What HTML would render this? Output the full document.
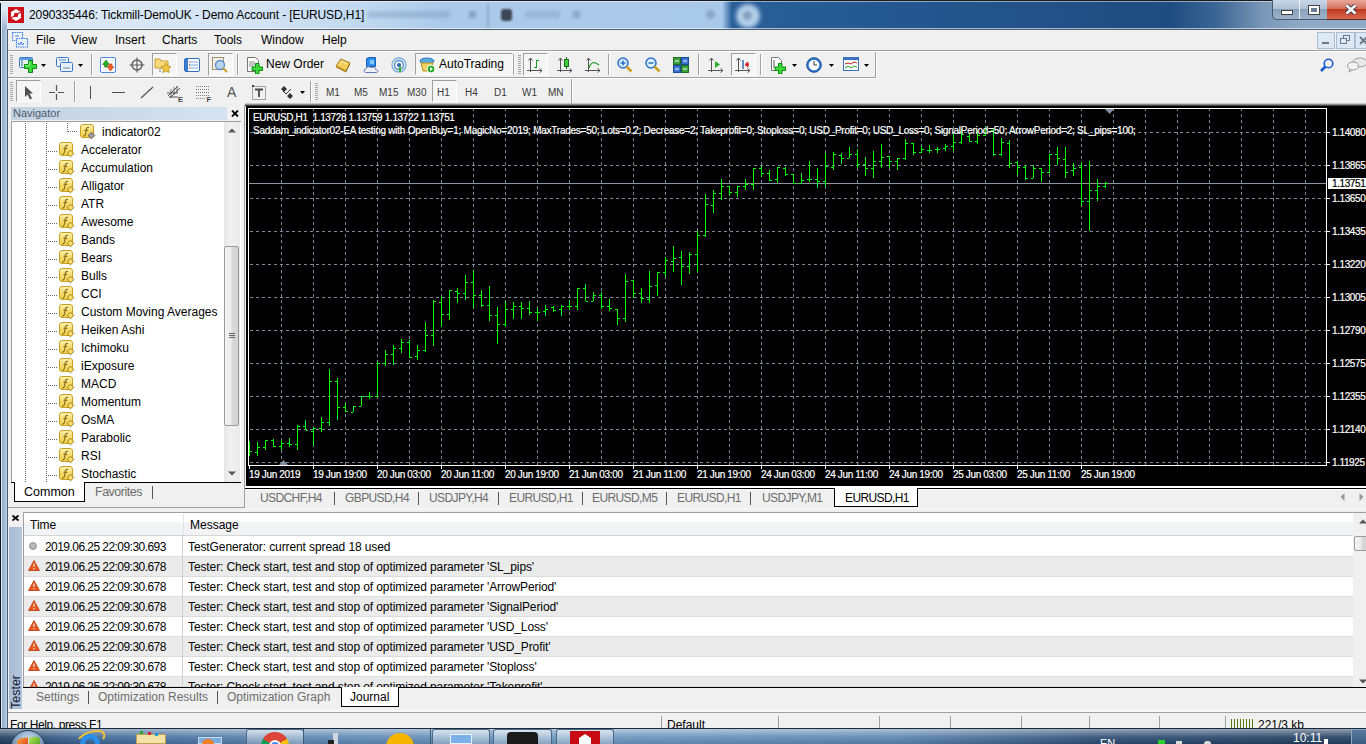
<!DOCTYPE html>
<html><head><meta charset="utf-8">
<style>
*{margin:0;padding:0;box-sizing:border-box}
html,body{width:1366px;height:744px;overflow:hidden;background:#f0f0f0;font-family:"Liberation Sans", sans-serif;font-size:12px;color:#000;position:relative}
.a{position:absolute}
.ct{position:absolute;color:#fff;font-size:10px;white-space:nowrap;line-height:12px;letter-spacing:-0.35px;-webkit-text-stroke:0.2px currentColor}
.t{position:absolute;white-space:nowrap;line-height:14px}
.nv{font-size:12px}
</style></head><body>
<div class="a" style="left:0;top:0;width:1366px;height:29px;background:linear-gradient(90deg,#dde9f6 0px,#d2e3f4 260px,#bdd6ef 380px,#abcaea 440px,#a9c9ea 722px,#2a5f98 732px,#245790 900px,#1f4c80 1170px,#3a6494 1215px,#7896b6 1262px,#8eaac6 1300px)"></div>
<div class="a" style="left:0;top:0;width:1366px;height:1px;background:#1a1a1a"></div>
<div class="a" style="left:0;top:1px;width:1366px;height:1px;background:rgba(255,255,255,0.5)"></div>
<div class="a" style="left:6px;top:28px;width:1360px;height:1px;background:rgba(255,255,255,0.6)"></div>
<svg class="a" style="left:8px;top:7px" width="16" height="16" viewBox="0 0 16 16"><rect width="16" height="16" fill="#d0101a"/><path d="M8 2l5 3v6l-5 3-5-3V5z" fill="#fff"/><circle cx="8" cy="8" r="2.2" fill="#d0101a"/><path d="M3 11L13 5" stroke="#d0101a" stroke-width="1.2"/></svg>
<div class="t" style="left:29px;top:8px;font-size:12px;color:#000;letter-spacing:-0.1px">2090335446: Tickmill-DemoUK - Demo Account - [EURUSD,H1]</div>
<div class="a" style="left:368px;top:11px;width:82px;height:7px;background:rgba(110,140,180,0.35);filter:blur(1.8px)"></div>
<div class="a" style="left:469px;top:11px;width:7px;height:7px;background:rgba(90,115,150,0.45);filter:blur(1.5px)"></div>
<div class="a" style="left:487px;top:3px;width:2px;height:25px;background:rgba(90,120,160,0.35);filter:blur(1px)"></div>
<div class="a" style="left:501px;top:9px;width:11px;height:12px;border-radius:3px;background:#3c4654;filter:blur(1.3px)"></div>
<div class="a" style="left:525px;top:11px;width:35px;height:7px;background:rgba(110,140,180,0.3);filter:blur(1.8px)"></div>
<div class="a" style="left:573px;top:11px;width:7px;height:7px;background:rgba(90,115,150,0.4);filter:blur(1.5px)"></div>
<div class="a" style="left:706px;top:10px;width:9px;height:9px;border-radius:50%;background:rgba(90,115,150,0.4);filter:blur(1.5px)"></div>
<div class="a" style="left:736px;top:4px;width:24px;height:24px;border-radius:50%;background:#b4cfea;filter:blur(2px)"></div>
<div class="a" style="left:743px;top:11px;width:9px;height:9px;border-radius:50%;background:rgba(90,115,150,0.5);filter:blur(1.5px)"></div>
<div class="a" style="left:1272px;top:0;width:56px;height:20px;border:1px solid #445a72;border-top:none;border-radius:0 0 0 5px;background:linear-gradient(180deg,#c8d6e6 0,#b0c2d6 45%,#8aa2bc 50%,#9cb2c8 100%)"></div>
<div class="a" style="left:1299px;top:0;width:1px;height:19px;background:#e8eef5"></div>
<div class="a" style="left:1327px;top:0;width:39px;height:20px;border-bottom:1px solid #5a2a20;background:linear-gradient(180deg,#e8a898 0,#d87060 45%,#c03820 50%,#d86a50 100%)"></div>
<div class="a" style="left:1281px;top:10px;width:12px;height:5px;background:#fff;border:1px solid #444"></div>
<div class="a" style="left:1308px;top:5px;width:12px;height:10px;border:1px solid #444;background:#fff"></div>
<div class="a" style="left:1311px;top:8px;width:6px;height:4px;background:#6a7f96"></div>
<svg class="a" style="left:1345px;top:4px" width="12" height="11" viewBox="0 0 12 11"><path d="M1.5 1.5L10.5 9.5M10.5 1.5L1.5 9.5" stroke="#3a3a4a" stroke-width="4.4"/><path d="M1.5 1.5L10.5 9.5M10.5 1.5L1.5 9.5" stroke="#fff" stroke-width="2.6"/></svg>
<div class="a" style="left:0;top:29px;width:7px;height:699px;background:linear-gradient(90deg,#0a1420 0,#0a1420 1px,#e4eef8 1px,#e4eef8 2px,#8ea8c6 2px,#b6cee8 7px)"></div>
<div class="a" style="left:0;top:3px;width:7px;height:26px;background:linear-gradient(90deg,#0a1420 0,#0a1420 1px,#e4eef8 1px,#e4eef8 2px,transparent 2px)"></div>
<div class="a" style="left:2px;top:10px;width:5px;height:19px;background:linear-gradient(180deg,rgba(142,168,198,0),rgba(142,168,198,0.8))"></div>
<div class="a" style="left:7px;top:29px;width:1px;height:699px;background:#4e5e6e"></div>
<div class="a" style="left:7px;top:29px;width:1359px;height:1px;background:#4e5e6e"></div>
<div class="a" style="left:8px;top:50px;width:1358px;height:1px;background:#a0a0a0"></div>
<div class="a" style="left:8px;top:51px;width:1358px;height:1px;background:#fff"></div>
<svg class="a" style="left:12px;top:32px" width="17" height="16" viewBox="0 0 17 16"><rect x="0.5" y="0.5" width="10" height="8" fill="#eef4fc" stroke="#3a7ae8" stroke-width="1.2" stroke-dasharray="1.5 0.8"/><rect x="4.5" y="6.5" width="11" height="8.5" fill="#eef4fc" stroke="#3a7ae8" stroke-width="1.2" stroke-dasharray="1.5 0.8"/><path d="M6 11l1.5 2 1.5-3 1.5 3 1.5-2" stroke="#3a7ae8" fill="none"/><path d="M3 4h4" stroke="#3a7ae8"/></svg>
<div class="t" style="left:36px;top:33px">File</div>
<div class="t" style="left:71px;top:33px">View</div>
<div class="t" style="left:115px;top:33px">Insert</div>
<div class="t" style="left:162px;top:33px">Charts</div>
<div class="t" style="left:214px;top:33px">Tools</div>
<div class="t" style="left:261px;top:33px">Window</div>
<div class="t" style="left:322px;top:33px">Help</div>
<div class="a" style="left:1317px;top:32px;width:18px;height:17px;background:#dde8f4;border:1px solid #a8bcd4"></div>
<div class="a" style="left:1336px;top:32px;width:19px;height:17px;background:#dde8f4;border:1px solid #a8bcd4"></div>
<div class="a" style="left:1355px;top:32px;width:19px;height:17px;background:#dde8f4;border:1px solid #a8bcd4"></div>
<div class="a" style="left:1322px;top:42px;width:7px;height:2px;background:#6a7a8a"></div>
<svg class="a" style="left:1340px;top:35px" width="11" height="10" viewBox="0 0 11 10"><rect x="3.5" y="0.5" width="6" height="5" fill="none" stroke="#6a7a8a"/><rect x="0.5" y="3.5" width="6" height="5" fill="#dde8f4" stroke="#6a7a8a"/></svg>
<svg class="a" style="left:1359px;top:36px" width="9" height="9" viewBox="0 0 9 9"><path d="M1 1L8 8M8 1L1 8" stroke="#6a7a8a" stroke-width="2"/></svg>
<div class="a" style="left:875px;top:52px;width:1px;height:25px;background:#a0a0a0"></div>
<div class="a" style="left:876px;top:52px;width:1px;height:26px;background:#fff"></div>
<div class="a" style="left:8px;top:77px;width:868px;height:1px;background:#a0a0a0"></div>
<div class="a" style="left:8px;top:78px;width:868px;height:1px;background:#fff"></div>
<div class="a" style="left:571px;top:79px;width:1px;height:25px;background:#a0a0a0"></div>
<div class="a" style="left:572px;top:79px;width:1px;height:25px;background:#fff"></div>
<div class="a" style="left:10px;top:55px;width:3px;height:19px;background:repeating-linear-gradient(180deg,#a8a8a8 0,#a8a8a8 1px,transparent 1px,transparent 2px)"></div>
<div class="a" style="left:10px;top:82px;width:3px;height:19px;background:repeating-linear-gradient(180deg,#a8a8a8 0,#a8a8a8 1px,transparent 1px,transparent 2px)"></div>
<svg class="a" style="left:19px;top:57px" width="18" height="16" viewBox="0 0 18 16"><rect x="0.5" y="0.5" width="13" height="10" rx="1" fill="#e8f0fa" stroke="#3b78c8"/><rect x="1" y="1" width="12" height="2" fill="#5a9ae0"/><path d="M3 4V9" stroke="#6a8aaa"/><path d="M3 3V9M2 4l1-1 1 1M2 8l1 1 1-1" stroke="#7a9aba" fill="none" stroke-width="0.8"/><path d="M9.5 3.5h4v4h4v4h-4v4h-4v-4h-4v-4h4z" fill="#3ad83a" stroke="#0a8a0a" stroke-width="1"/><path d="M10.5 5v3.5h-4" stroke="#b8f8b8" stroke-width="0.8" fill="none"/></svg>
<svg class="a" style="left:41px;top:64px" width="5" height="3" viewBox="0 0 5 3"><path d="M0 0H5L2.5 3Z" fill="#000"/></svg>
<svg class="a" style="left:56px;top:57px" width="17" height="15" viewBox="0 0 17 15"><rect x="0.5" y="0.5" width="12" height="9" rx="1" fill="#e8f0fa" stroke="#3b78c8"/><rect x="4.5" y="5.5" width="12" height="9" rx="1" fill="#e8f0fa" stroke="#3b78c8"/><path d="M3 3h7M7 11h7" stroke="#6a8aaa"/></svg>
<svg class="a" style="left:78px;top:64px" width="5" height="3" viewBox="0 0 5 3"><path d="M0 0H5L2.5 3Z" fill="#000"/></svg>
<div class="a" style="left:91px;top:54px;width:1px;height:21px;background:#a0a0a0"></div><div class="a" style="left:92px;top:54px;width:1px;height:21px;background:#fff"></div>
<svg class="a" style="left:100px;top:57px" width="16" height="16" viewBox="0 0 16 16"><rect x="0.5" y="0.5" width="15" height="15" rx="1.5" fill="#fff" stroke="#4a8ad8"/><path d="M9 4h5M9 7h5M3 10h11M3 13h11" stroke="#dde6ee"/><path d="M2.5 7.5l3.5-4.5 3.5 4.5h-2v2.5h-3v-2.5z" fill="#22b022" stroke="#128012" stroke-width="0.6"/><path d="M7 9.5h2v-2.5h3v2.5h2l-3.5 4.5z" fill="#f0602a" stroke="#c04010" stroke-width="0.6"/></svg>
<svg class="a" style="left:129px;top:57px" width="16" height="16" viewBox="0 0 16 16"><circle cx="8" cy="8" r="5" fill="none" stroke="#5a5a5a" stroke-width="1.4"/><path d="M8 0.5V15.5M0.5 8H15.5" stroke="#5a5a5a" stroke-width="1.1"/></svg>
<div class="a" style="left:152px;top:53px;width:25px;height:23px;border-top:1px solid #a0a0a0;border-left:1px solid #a0a0a0;border-right:1px solid #fff;border-bottom:1px solid #fff;background:repeating-conic-gradient(#f0f0f0 0 25%,#fbfbfb 0 50%) 0 0/2px 2px"></div>
<svg class="a" style="left:154px;top:57px" width="18" height="17" viewBox="0 0 18 17"><path d="M1 2h5l1 2h7v7H1z" fill="#f5d878" stroke="#c9a030"/><path d="M12 6l1.6 3.2 3.4.5-2.5 2.4.6 3.4-3.1-1.6-3.1 1.6.6-3.4-2.5-2.4 3.4-.5z" fill="#f5c842" stroke="#b8901a" stroke-width="0.8"/><path d="M6 12v4" stroke="#333" stroke-dasharray="1 1"/></svg>
<svg class="a" style="left:184px;top:58px" width="16" height="14" viewBox="0 0 16 14"><rect x="0.5" y="0.5" width="15" height="13" rx="1.5" fill="#fff" stroke="#2f6fc0"/><rect x="1" y="1" width="3" height="12" fill="#3a7ad0"/><path d="M6 4h8M6 7h8M6 10h8" stroke="#7aa8e8"/><path d="M5 4h1M5 10h1" stroke="#e02020"/><path d="M5 7h1" stroke="#222"/></svg>
<div class="a" style="left:208px;top:53px;width:25px;height:23px;border-top:1px solid #a0a0a0;border-left:1px solid #a0a0a0;border-right:1px solid #fff;border-bottom:1px solid #fff;background:repeating-conic-gradient(#f0f0f0 0 25%,#fbfbfb 0 50%) 0 0/2px 2px"></div>
<svg class="a" style="left:212px;top:57px" width="17" height="17" viewBox="0 0 17 17"><rect x="0.5" y="0.5" width="11" height="12" fill="#f4f0e8" stroke="#a09070"/><circle cx="8" cy="8" r="4.5" fill="#b8d4f0" stroke="#5a8ac8" stroke-width="1.3"/><path d="M11 11l4 4" stroke="#d0a020" stroke-width="2"/></svg>
<div class="a" style="left:237px;top:54px;width:1px;height:21px;background:#a0a0a0"></div><div class="a" style="left:238px;top:54px;width:1px;height:21px;background:#fff"></div>
<svg class="a" style="left:246px;top:57px" width="17" height="17" viewBox="0 0 17 17"><path d="M1.5 0.5h8l3 3v11h-11z" fill="#fff" stroke="#777"/><path d="M3 5h6M3 7h6M3 9h5" stroke="#888"/><path d="M9.5 6.5h3.5v3.5h3.5v3.5h-3.5v3.5h-3.5v-3.5h-3.5v-3.5h3.5z" fill="#3ad83a" stroke="#0a8a0a" stroke-width="1"/></svg>
<div class="t" style="left:266px;top:57px">New Order</div>
<svg class="a" style="left:335px;top:57px" width="16" height="16" viewBox="0 0 16 16"><path d="M1 9L6 2L15 6L11 14Z" fill="#f2cc58" stroke="#a87a18"/><path d="M1 9L11 14L11 15.5L1 10.5Z" fill="#b8861c"/><path d="M11 14L15 6L15 7.5L11 15.5Z" fill="#8a6210"/><path d="M4 8.5L7 4.5L12 7" stroke="#fff0b0" fill="none"/></svg>
<svg class="a" style="left:363px;top:57px" width="16" height="17" viewBox="0 0 16 17"><path d="M3.5 1.5L6 0.5H12.5V9.5H3.5Z" fill="#2a8ef0" stroke="#1a5ab0"/><path d="M7 4h4M7 6h4" stroke="#dff"/><path d="M3 15.5C0.5 15.5 0.5 12 3 12C3 9.5 7 9 8 11C9 9.5 13 10 12.5 12.5C15.5 12.5 15.5 15.5 13 15.5Z" fill="#eef2f8" stroke="#5a7ab0"/></svg>
<svg class="a" style="left:391px;top:57px" width="16" height="16" viewBox="0 0 16 16"><circle cx="8" cy="8" r="7" fill="none" stroke="#7aaad8" stroke-width="1.3"/><circle cx="8" cy="8" r="4.5" fill="none" stroke="#4a8ad0" stroke-width="1.3"/><circle cx="8" cy="8" r="2" fill="#2a6ab8"/><path d="M9 9v6" stroke="#3ab03a" stroke-width="2"/></svg>
<div class="a" style="left:415px;top:53px;width:98px;height:22px;border-top:1px solid #a0a0a0;border-left:1px solid #a0a0a0;border-right:1px solid #fff;border-bottom:1px solid #fff;background:repeating-conic-gradient(#f0f0f0 0 25%,#fbfbfb 0 50%) 0 0/2px 2px"></div>
<svg class="a" style="left:419px;top:57px" width="17" height="17" viewBox="0 0 17 17"><ellipse cx="8" cy="4" rx="7" ry="3" fill="#5aa8e0" stroke="#2a78b8"/><path d="M2 6h12l-2 8h-8z" fill="#f0d060" stroke="#b89020"/><circle cx="12" cy="12" r="4" fill="#22aa22" stroke="#fff"/><path d="M11 10l3 2-3 2z" fill="#fff"/></svg>
<div class="t" style="left:439px;top:57px">AutoTrading</div>
<div class="a" style="left:513px;top:54px;width:1px;height:21px;background:#a0a0a0"></div><div class="a" style="left:514px;top:54px;width:1px;height:21px;background:#fff"></div>
<div class="a" style="left:518px;top:55px;width:3px;height:19px;background:repeating-linear-gradient(180deg,#a8a8a8 0,#a8a8a8 1px,transparent 1px,transparent 2px)"></div>
<div class="a" style="left:523px;top:53px;width:25px;height:23px;border-top:1px solid #a0a0a0;border-left:1px solid #a0a0a0;border-right:1px solid #fff;border-bottom:1px solid #fff;background:repeating-conic-gradient(#f0f0f0 0 25%,#fbfbfb 0 50%) 0 0/2px 2px"></div>
<svg class="a" style="left:527px;top:57px" width="16" height="16" viewBox="0 0 16 16"><path d="M3.5 1V15M0 13.5H15" stroke="#555" fill="none" shape-rendering="crispEdges"/><path d="M1.5 3.5L3.5 1L5.5 3.5M12.5 11.5L15 13.5L12.5 15.5" stroke="#555" fill="none"/><path d="M9.5 3V11M7 10.5h2.5M9.5 3.5h2.5" stroke="#1a9a1a" stroke-width="1.2" shape-rendering="crispEdges"/></svg>
<svg class="a" style="left:557px;top:57px" width="16" height="16" viewBox="0 0 16 16"><path d="M3.5 1V15M0 13.5H15" stroke="#555" fill="none" shape-rendering="crispEdges"/><path d="M1.5 3.5L3.5 1L5.5 3.5M12.5 11.5L15 13.5L12.5 15.5" stroke="#555" fill="none"/><path d="M9.5 0V12" stroke="#1a6a1a"/><rect x="7.5" y="2.5" width="4" height="7" fill="#3ad03a" stroke="#1a6a1a"/></svg>
<svg class="a" style="left:585px;top:57px" width="16" height="16" viewBox="0 0 16 16"><path d="M3.5 1V15M0 13.5H15" stroke="#555" fill="none" shape-rendering="crispEdges"/><path d="M1.5 3.5L3.5 1L5.5 3.5M12.5 11.5L15 13.5L12.5 15.5" stroke="#555" fill="none"/><path d="M4 11C6 5 9 4 14 8" stroke="#1a9a1a" stroke-width="1.2" fill="none"/></svg>
<div class="a" style="left:608px;top:54px;width:1px;height:21px;background:#a0a0a0"></div><div class="a" style="left:609px;top:54px;width:1px;height:21px;background:#fff"></div>
<svg class="a" style="left:617px;top:57px" width="16" height="16" viewBox="0 0 16 16"><circle cx="6" cy="6" r="5" fill="#dceefe" stroke="#2a70c8" stroke-width="1.5"/><path d="M9.5 9.5l5 5" stroke="#d0a020" stroke-width="2.5"/><path d="M3.5 6h5" stroke="#2a70c8" stroke-width="1.5"/><path d="M6 3.5v5" stroke="#2a70c8" stroke-width="1.5"/></svg>
<svg class="a" style="left:645px;top:57px" width="16" height="16" viewBox="0 0 16 16"><circle cx="6" cy="6" r="5" fill="#dceefe" stroke="#2a70c8" stroke-width="1.5"/><path d="M9.5 9.5l5 5" stroke="#d0a020" stroke-width="2.5"/><path d="M3.5 6h5" stroke="#2a70c8" stroke-width="1.5"/></svg>
<svg class="a" style="left:673px;top:57px" width="16" height="16" viewBox="0 0 16 16"><rect x="0.5" y="0.5" width="7" height="7" fill="#3aa03a" stroke="#207020"/><rect x="8.5" y="0.5" width="7" height="7" fill="#3a70d0" stroke="#1a4aa0"/><rect x="0.5" y="8.5" width="7" height="7" fill="#3a70d0" stroke="#1a4aa0"/><rect x="8.5" y="8.5" width="7" height="7" fill="#3aa03a" stroke="#207020"/><path d="M2 4h4M10 4h4M2 12h4M10 12h4" stroke="#fff"/></svg>
<div class="a" style="left:698px;top:54px;width:1px;height:21px;background:#a0a0a0"></div><div class="a" style="left:699px;top:54px;width:1px;height:21px;background:#fff"></div>
<svg class="a" style="left:708px;top:57px" width="16" height="16" viewBox="0 0 16 16"><path d="M3.5 1V15M0 13.5H15" stroke="#555" fill="none" shape-rendering="crispEdges"/><path d="M1.5 3.5L3.5 1L5.5 3.5M12.5 11.5L15 13.5L12.5 15.5" stroke="#555" fill="none"/><path d="M7 4v7l5-3.5z" fill="#2ab02a"/></svg>
<div class="a" style="left:731px;top:53px;width:25px;height:23px;border-top:1px solid #a0a0a0;border-left:1px solid #a0a0a0;border-right:1px solid #fff;border-bottom:1px solid #fff;background:repeating-conic-gradient(#f0f0f0 0 25%,#fbfbfb 0 50%) 0 0/2px 2px"></div>
<svg class="a" style="left:735px;top:57px" width="16" height="16" viewBox="0 0 16 16"><path d="M3.5 1V15M0 13.5H15" stroke="#555" fill="none" shape-rendering="crispEdges"/><path d="M1.5 3.5L3.5 1L5.5 3.5M12.5 11.5L15 13.5L12.5 15.5" stroke="#555" fill="none"/><path d="M8 3V12" stroke="#1a5aa0" stroke-width="1.3"/><path d="M14 7.5H10M10 7.5l3-2.5v5z" fill="#d02020" stroke="#d02020"/></svg>
<div class="a" style="left:760px;top:54px;width:1px;height:21px;background:#a0a0a0"></div><div class="a" style="left:761px;top:54px;width:1px;height:21px;background:#fff"></div>
<svg class="a" style="left:770px;top:57px" width="17" height="17" viewBox="0 0 17 17"><path d="M1.5 0.5h7l3 3v10h-10z" fill="#fff" stroke="#777"/><path d="M4 3v8" stroke="#555"/><path d="M8.5 6.5h3.5v3.5h3.5v3.5h-3.5v3.5h-3.5v-3.5h-3.5v-3.5h3.5z" fill="#3ad83a" stroke="#0a8a0a" stroke-width="1"/></svg>
<svg class="a" style="left:792px;top:64px" width="5" height="3" viewBox="0 0 5 3"><path d="M0 0H5L2.5 3Z" fill="#000"/></svg>
<svg class="a" style="left:806px;top:57px" width="16" height="16" viewBox="0 0 16 16"><circle cx="8" cy="8" r="7.3" fill="#2a78d0" stroke="#1a4a90"/><circle cx="8" cy="8" r="5.3" fill="#fff"/><path d="M8 4V8H11" stroke="#333" fill="none"/></svg>
<svg class="a" style="left:829px;top:64px" width="5" height="3" viewBox="0 0 5 3"><path d="M0 0H5L2.5 3Z" fill="#000"/></svg>
<svg class="a" style="left:843px;top:57px" width="16" height="14" viewBox="0 0 16 14"><rect x="0.5" y="0.5" width="15" height="13" fill="#fff" stroke="#3a70c0"/><rect x="1" y="1" width="14" height="2" fill="#3a70c0"/><path d="M2 7l3-1 3 1 3-2 3 1" stroke="#c02020" fill="none"/><path d="M2 11l3-2 3 2 3-2 3 1" stroke="#22a022" fill="none"/></svg>
<svg class="a" style="left:864px;top:64px" width="5" height="3" viewBox="0 0 5 3"><path d="M0 0H5L2.5 3Z" fill="#000"/></svg>
<svg class="a" style="left:1320px;top:58px" width="14" height="14" viewBox="0 0 14 14"><circle cx="8.5" cy="5.5" r="4.3" fill="none" stroke="#1a5ad0" stroke-width="1.6"/><path d="M5.5 8.5L1 13" stroke="#1a5ad0" stroke-width="2.6"/></svg>
<svg class="a" style="left:1347px;top:57px" width="19" height="16" viewBox="0 0 19 16"><ellipse cx="13" cy="5.5" rx="7" ry="4.5" fill="#e8e8e8" stroke="#9a9a9a"/><ellipse cx="6" cy="9" rx="5.5" ry="4" fill="#f4f4f4" stroke="#9a9a9a"/><path d="M3 12l-1 3 3-2" fill="#f4f4f4" stroke="#9a9a9a"/></svg>
<div class="a" style="left:16px;top:80px;width:25px;height:22px;border-top:1px solid #a0a0a0;border-left:1px solid #a0a0a0;border-right:1px solid #fff;border-bottom:1px solid #fff;background:repeating-conic-gradient(#f0f0f0 0 25%,#fbfbfb 0 50%) 0 0/2px 2px"></div>
<svg class="a" style="left:24px;top:86px" width="10" height="14" viewBox="0 0 10 14"><path d="M1 0V11L3.5 8.5L6 13.5L8 12.5L5.5 7.5H9Z" fill="#505050"/></svg>
<svg class="a" style="left:49px;top:85px" width="15" height="15" viewBox="0 0 15 15"><path d="M7.5 0V6M7.5 9V15M0 7.5H6M9 7.5H15" stroke="#555" stroke-width="1.2"/></svg>
<div class="a" style="left:74px;top:81px;width:1px;height:21px;background:#a0a0a0"></div><div class="a" style="left:75px;top:81px;width:1px;height:21px;background:#fff"></div>
<div class="a" style="left:90px;top:86px;width:1px;height:13px;background:#505050"></div>
<div class="a" style="left:112px;top:92px;width:13px;height:1px;background:#505050"></div>
<svg class="a" style="left:140px;top:86px" width="14" height="13" viewBox="0 0 14 13"><path d="M1 12L13 1" stroke="#555" stroke-width="1.2"/></svg>
<svg class="a" style="left:166px;top:84px" width="18" height="18" viewBox="0 0 18 18"><path d="M2 12L12 2M4 14L14 4M1 9h11M3 13h9" stroke="#555" stroke-width="1"/><path d="M5 5v8M8 3v8M11 2v7" stroke="#555" stroke-width="0.8"/><text x="12" y="17.5" font-size="7.5" font-weight="bold" fill="#444" font-family="Liberation Sans">E</text></svg>
<svg class="a" style="left:195px;top:85px" width="18" height="17" viewBox="0 0 18 17"><path d="M1 1.5h14M1 4.5h14M1 7.5h14M1 10.5h14M1 13.5h10" stroke="#777" stroke-dasharray="1 1"/><text x="11.5" y="17" font-size="7.5" font-weight="bold" fill="#444" font-family="Liberation Sans">F</text></svg>
<div class="t" style="left:227px;top:85px;font-size:14px;color:#555">A</div>
<svg class="a" style="left:252px;top:85px" width="14" height="15" viewBox="0 0 14 15"><rect x="0.5" y="1.5" width="13" height="13" fill="none" stroke="#555" stroke-dasharray="1 1"/><path d="M3 4.5h8M7 4.5V12" stroke="#444" stroke-width="1.8"/><path d="M0 0h2v2h-2z" fill="#444"/></svg>
<svg class="a" style="left:280px;top:85px" width="15" height="15" viewBox="0 0 15 15"><path d="M4 1l3 3-3 3-3-3zM10 8l3 3-3 3-3-3z" fill="#333"/><path d="M3 6l3 3 5-5" stroke="#333" fill="none"/></svg>
<svg class="a" style="left:300px;top:91px" width="5" height="3" viewBox="0 0 5 3"><path d="M0 0H5L2.5 3Z" fill="#000"/></svg>
<div class="a" style="left:310px;top:81px;width:1px;height:21px;background:#a0a0a0"></div><div class="a" style="left:311px;top:81px;width:1px;height:21px;background:#fff"></div>
<div class="a" style="left:315px;top:83px;width:3px;height:18px;background:repeating-linear-gradient(180deg,#a8a8a8 0,#a8a8a8 1px,transparent 1px,transparent 2px)"></div>
<div class="a" style="left:432px;top:80px;width:25px;height:22px;border-top:1px solid #a0a0a0;border-left:1px solid #a0a0a0;border-right:1px solid #fff;border-bottom:1px solid #fff;background:repeating-conic-gradient(#f0f0f0 0 25%,#fbfbfb 0 50%) 0 0/2px 2px"></div>
<div class="t" style="left:326px;top:86px;font-size:10px;color:#3a3a3a">M1</div>
<div class="t" style="left:354px;top:86px;font-size:10px;color:#3a3a3a">M5</div>
<div class="t" style="left:379px;top:86px;font-size:10px;color:#3a3a3a">M15</div>
<div class="t" style="left:407px;top:86px;font-size:10px;color:#3a3a3a">M30</div>
<div class="t" style="left:437px;top:86px;font-size:10px;color:#3a3a3a">H1</div>
<div class="t" style="left:465px;top:86px;font-size:10px;color:#3a3a3a">H4</div>
<div class="t" style="left:494px;top:86px;font-size:10px;color:#3a3a3a">D1</div>
<div class="t" style="left:522px;top:86px;font-size:10px;color:#3a3a3a">W1</div>
<div class="t" style="left:548px;top:86px;font-size:10px;color:#3a3a3a">MN</div>
<div class="a" style="left:245px;top:103px;width:1121px;height:3px;background:linear-gradient(180deg,#e0e0e0 0,#a0a0a0 40%,#202020 100%)"></div>
<div class="a" style="left:8px;top:105px;width:237px;height:403px;background:#f0f0f0"></div>
<div class="a" style="left:11px;top:107px;width:216px;height:13px;background:linear-gradient(90deg,#c4d2e2,#d4e2f2)"></div>
<div class="t" style="left:13px;top:106px;font-size:11px;color:#4b5b6e">Navigator</div>
<svg class="a" style="left:231px;top:110px" width="8" height="7" viewBox="0 0 8 7"><path d="M1 0.5L7 6.5M7 0.5L1 6.5" stroke="#000" stroke-width="1.8"/></svg>
<div class="a" style="left:11px;top:121px;width:230px;height:362px;background:#fff;border-top:1px solid #a0a0a0;border-left:1px solid #a0a0a0"></div>
<div class="a" style="left:224px;top:122px;width:16px;height:360px;background:linear-gradient(90deg,#e6e6e6,#f0f0f0 40%,#eaeaea)"></div>
<svg class="a" style="left:228px;top:128px" width="8" height="5" viewBox="0 0 8 5"><path d="M0 4.5L4 0.5 8 4.5Z" fill="#555"/></svg>
<svg class="a" style="left:228px;top:471px" width="8" height="5" viewBox="0 0 8 5"><path d="M0 0.5L4 4.5 8 0.5Z" fill="#555"/></svg>
<div class="a" style="left:224px;top:246px;width:15px;height:180px;background:linear-gradient(90deg,#f4f4f4 0,#ececec 45%,#dadada 55%,#d2d2d2);border:1px solid #9a9a9a;border-radius:2px"></div>
<div class="a" style="left:229px;top:333px;width:6px;height:5px;background:repeating-linear-gradient(180deg,#666 0,#666 1px,transparent 1px,transparent 2px)"></div>
<div class="a" style="left:25px;top:123px;width:1px;height:359px;background:repeating-linear-gradient(180deg,#666 0,#666 1px,transparent 1px,transparent 2px)"></div>
<div class="a" style="left:46px;top:123px;width:1px;height:359px;background:repeating-linear-gradient(180deg,#666 0,#666 1px,transparent 1px,transparent 2px)"></div>
<div class="a" style="left:67px;top:123px;width:1px;height:9px;background:repeating-linear-gradient(180deg,#666 0,#666 1px,transparent 1px,transparent 2px)"></div>
<div class="a" style="left:68px;top:131px;width:10px;height:1px;background:repeating-linear-gradient(90deg,#666 0,#666 1px,transparent 1px,transparent 2px)"></div>
<svg class="a" style="left:80px;top:124px" width="16" height="16" viewBox="0 0 16 16"><defs><linearGradient id="gf" x1="0" y1="0" x2="0" y2="1"><stop offset="0" stop-color="#fff4b8"/><stop offset="0.5" stop-color="#f6dc6a"/><stop offset="1" stop-color="#f0d050"/></linearGradient></defs><rect x="0.5" y="0.5" width="13" height="13" rx="2.5" fill="url(#gf)" stroke="#c8a020"/><path d="M9 3.6c-1.3-.6-2.3 0-2.6 1.4L5.4 10.4c-.3 1.3-1.2 1.7-2.1 1.3M4.6 6.4h3.6" stroke="#8a7020" stroke-width="1.2" fill="none"/><path d="M11.5 8.2l3.3 3.3-3.3 3.3-3.3-3.3z" fill="#a0a0a0" stroke="#606060" stroke-width="1"/></svg>
<div class="t nv" style="left:102px;top:125px">indicator02</div>
<div class="a" style="left:48px;top:151px;width:9px;height:1px;background:repeating-linear-gradient(90deg,#666 0,#666 1px,transparent 1px,transparent 2px)"></div>
<svg class="a" style="left:59px;top:142px" width="16" height="16" viewBox="0 0 16 16"><defs><linearGradient id="gf" x1="0" y1="0" x2="0" y2="1"><stop offset="0" stop-color="#fff4b8"/><stop offset="0.5" stop-color="#f6dc6a"/><stop offset="1" stop-color="#f0d050"/></linearGradient></defs><rect x="0.5" y="0.5" width="13" height="13" rx="2.5" fill="url(#gf)" stroke="#c8a020"/><path d="M9 3.6c-1.3-.6-2.3 0-2.6 1.4L5.4 10.4c-.3 1.3-1.2 1.7-2.1 1.3M4.6 6.4h3.6" stroke="#8a7020" stroke-width="1.2" fill="none"/><path d="M11.5 8.2l3.3 3.3-3.3 3.3-3.3-3.3z" fill="#f6dc6a" stroke="#a07810" stroke-width="1"/></svg>
<div class="t nv" style="left:81px;top:143px">Accelerator</div>
<div class="a" style="left:48px;top:169px;width:9px;height:1px;background:repeating-linear-gradient(90deg,#666 0,#666 1px,transparent 1px,transparent 2px)"></div>
<svg class="a" style="left:59px;top:160px" width="16" height="16" viewBox="0 0 16 16"><defs><linearGradient id="gf" x1="0" y1="0" x2="0" y2="1"><stop offset="0" stop-color="#fff4b8"/><stop offset="0.5" stop-color="#f6dc6a"/><stop offset="1" stop-color="#f0d050"/></linearGradient></defs><rect x="0.5" y="0.5" width="13" height="13" rx="2.5" fill="url(#gf)" stroke="#c8a020"/><path d="M9 3.6c-1.3-.6-2.3 0-2.6 1.4L5.4 10.4c-.3 1.3-1.2 1.7-2.1 1.3M4.6 6.4h3.6" stroke="#8a7020" stroke-width="1.2" fill="none"/><path d="M11.5 8.2l3.3 3.3-3.3 3.3-3.3-3.3z" fill="#f6dc6a" stroke="#a07810" stroke-width="1"/></svg>
<div class="t nv" style="left:81px;top:161px">Accumulation</div>
<div class="a" style="left:48px;top:187px;width:9px;height:1px;background:repeating-linear-gradient(90deg,#666 0,#666 1px,transparent 1px,transparent 2px)"></div>
<svg class="a" style="left:59px;top:178px" width="16" height="16" viewBox="0 0 16 16"><defs><linearGradient id="gf" x1="0" y1="0" x2="0" y2="1"><stop offset="0" stop-color="#fff4b8"/><stop offset="0.5" stop-color="#f6dc6a"/><stop offset="1" stop-color="#f0d050"/></linearGradient></defs><rect x="0.5" y="0.5" width="13" height="13" rx="2.5" fill="url(#gf)" stroke="#c8a020"/><path d="M9 3.6c-1.3-.6-2.3 0-2.6 1.4L5.4 10.4c-.3 1.3-1.2 1.7-2.1 1.3M4.6 6.4h3.6" stroke="#8a7020" stroke-width="1.2" fill="none"/><path d="M11.5 8.2l3.3 3.3-3.3 3.3-3.3-3.3z" fill="#f6dc6a" stroke="#a07810" stroke-width="1"/></svg>
<div class="t nv" style="left:81px;top:179px">Alligator</div>
<div class="a" style="left:48px;top:205px;width:9px;height:1px;background:repeating-linear-gradient(90deg,#666 0,#666 1px,transparent 1px,transparent 2px)"></div>
<svg class="a" style="left:59px;top:196px" width="16" height="16" viewBox="0 0 16 16"><defs><linearGradient id="gf" x1="0" y1="0" x2="0" y2="1"><stop offset="0" stop-color="#fff4b8"/><stop offset="0.5" stop-color="#f6dc6a"/><stop offset="1" stop-color="#f0d050"/></linearGradient></defs><rect x="0.5" y="0.5" width="13" height="13" rx="2.5" fill="url(#gf)" stroke="#c8a020"/><path d="M9 3.6c-1.3-.6-2.3 0-2.6 1.4L5.4 10.4c-.3 1.3-1.2 1.7-2.1 1.3M4.6 6.4h3.6" stroke="#8a7020" stroke-width="1.2" fill="none"/><path d="M11.5 8.2l3.3 3.3-3.3 3.3-3.3-3.3z" fill="#f6dc6a" stroke="#a07810" stroke-width="1"/></svg>
<div class="t nv" style="left:81px;top:197px">ATR</div>
<div class="a" style="left:48px;top:223px;width:9px;height:1px;background:repeating-linear-gradient(90deg,#666 0,#666 1px,transparent 1px,transparent 2px)"></div>
<svg class="a" style="left:59px;top:214px" width="16" height="16" viewBox="0 0 16 16"><defs><linearGradient id="gf" x1="0" y1="0" x2="0" y2="1"><stop offset="0" stop-color="#fff4b8"/><stop offset="0.5" stop-color="#f6dc6a"/><stop offset="1" stop-color="#f0d050"/></linearGradient></defs><rect x="0.5" y="0.5" width="13" height="13" rx="2.5" fill="url(#gf)" stroke="#c8a020"/><path d="M9 3.6c-1.3-.6-2.3 0-2.6 1.4L5.4 10.4c-.3 1.3-1.2 1.7-2.1 1.3M4.6 6.4h3.6" stroke="#8a7020" stroke-width="1.2" fill="none"/><path d="M11.5 8.2l3.3 3.3-3.3 3.3-3.3-3.3z" fill="#f6dc6a" stroke="#a07810" stroke-width="1"/></svg>
<div class="t nv" style="left:81px;top:215px">Awesome</div>
<div class="a" style="left:48px;top:241px;width:9px;height:1px;background:repeating-linear-gradient(90deg,#666 0,#666 1px,transparent 1px,transparent 2px)"></div>
<svg class="a" style="left:59px;top:232px" width="16" height="16" viewBox="0 0 16 16"><defs><linearGradient id="gf" x1="0" y1="0" x2="0" y2="1"><stop offset="0" stop-color="#fff4b8"/><stop offset="0.5" stop-color="#f6dc6a"/><stop offset="1" stop-color="#f0d050"/></linearGradient></defs><rect x="0.5" y="0.5" width="13" height="13" rx="2.5" fill="url(#gf)" stroke="#c8a020"/><path d="M9 3.6c-1.3-.6-2.3 0-2.6 1.4L5.4 10.4c-.3 1.3-1.2 1.7-2.1 1.3M4.6 6.4h3.6" stroke="#8a7020" stroke-width="1.2" fill="none"/><path d="M11.5 8.2l3.3 3.3-3.3 3.3-3.3-3.3z" fill="#f6dc6a" stroke="#a07810" stroke-width="1"/></svg>
<div class="t nv" style="left:81px;top:233px">Bands</div>
<div class="a" style="left:48px;top:259px;width:9px;height:1px;background:repeating-linear-gradient(90deg,#666 0,#666 1px,transparent 1px,transparent 2px)"></div>
<svg class="a" style="left:59px;top:250px" width="16" height="16" viewBox="0 0 16 16"><defs><linearGradient id="gf" x1="0" y1="0" x2="0" y2="1"><stop offset="0" stop-color="#fff4b8"/><stop offset="0.5" stop-color="#f6dc6a"/><stop offset="1" stop-color="#f0d050"/></linearGradient></defs><rect x="0.5" y="0.5" width="13" height="13" rx="2.5" fill="url(#gf)" stroke="#c8a020"/><path d="M9 3.6c-1.3-.6-2.3 0-2.6 1.4L5.4 10.4c-.3 1.3-1.2 1.7-2.1 1.3M4.6 6.4h3.6" stroke="#8a7020" stroke-width="1.2" fill="none"/><path d="M11.5 8.2l3.3 3.3-3.3 3.3-3.3-3.3z" fill="#f6dc6a" stroke="#a07810" stroke-width="1"/></svg>
<div class="t nv" style="left:81px;top:251px">Bears</div>
<div class="a" style="left:48px;top:277px;width:9px;height:1px;background:repeating-linear-gradient(90deg,#666 0,#666 1px,transparent 1px,transparent 2px)"></div>
<svg class="a" style="left:59px;top:268px" width="16" height="16" viewBox="0 0 16 16"><defs><linearGradient id="gf" x1="0" y1="0" x2="0" y2="1"><stop offset="0" stop-color="#fff4b8"/><stop offset="0.5" stop-color="#f6dc6a"/><stop offset="1" stop-color="#f0d050"/></linearGradient></defs><rect x="0.5" y="0.5" width="13" height="13" rx="2.5" fill="url(#gf)" stroke="#c8a020"/><path d="M9 3.6c-1.3-.6-2.3 0-2.6 1.4L5.4 10.4c-.3 1.3-1.2 1.7-2.1 1.3M4.6 6.4h3.6" stroke="#8a7020" stroke-width="1.2" fill="none"/><path d="M11.5 8.2l3.3 3.3-3.3 3.3-3.3-3.3z" fill="#f6dc6a" stroke="#a07810" stroke-width="1"/></svg>
<div class="t nv" style="left:81px;top:269px">Bulls</div>
<div class="a" style="left:48px;top:295px;width:9px;height:1px;background:repeating-linear-gradient(90deg,#666 0,#666 1px,transparent 1px,transparent 2px)"></div>
<svg class="a" style="left:59px;top:286px" width="16" height="16" viewBox="0 0 16 16"><defs><linearGradient id="gf" x1="0" y1="0" x2="0" y2="1"><stop offset="0" stop-color="#fff4b8"/><stop offset="0.5" stop-color="#f6dc6a"/><stop offset="1" stop-color="#f0d050"/></linearGradient></defs><rect x="0.5" y="0.5" width="13" height="13" rx="2.5" fill="url(#gf)" stroke="#c8a020"/><path d="M9 3.6c-1.3-.6-2.3 0-2.6 1.4L5.4 10.4c-.3 1.3-1.2 1.7-2.1 1.3M4.6 6.4h3.6" stroke="#8a7020" stroke-width="1.2" fill="none"/><path d="M11.5 8.2l3.3 3.3-3.3 3.3-3.3-3.3z" fill="#f6dc6a" stroke="#a07810" stroke-width="1"/></svg>
<div class="t nv" style="left:81px;top:287px">CCI</div>
<div class="a" style="left:48px;top:313px;width:9px;height:1px;background:repeating-linear-gradient(90deg,#666 0,#666 1px,transparent 1px,transparent 2px)"></div>
<svg class="a" style="left:59px;top:304px" width="16" height="16" viewBox="0 0 16 16"><defs><linearGradient id="gf" x1="0" y1="0" x2="0" y2="1"><stop offset="0" stop-color="#fff4b8"/><stop offset="0.5" stop-color="#f6dc6a"/><stop offset="1" stop-color="#f0d050"/></linearGradient></defs><rect x="0.5" y="0.5" width="13" height="13" rx="2.5" fill="url(#gf)" stroke="#c8a020"/><path d="M9 3.6c-1.3-.6-2.3 0-2.6 1.4L5.4 10.4c-.3 1.3-1.2 1.7-2.1 1.3M4.6 6.4h3.6" stroke="#8a7020" stroke-width="1.2" fill="none"/><path d="M11.5 8.2l3.3 3.3-3.3 3.3-3.3-3.3z" fill="#f6dc6a" stroke="#a07810" stroke-width="1"/></svg>
<div class="t nv" style="left:81px;top:305px">Custom Moving Averages</div>
<div class="a" style="left:48px;top:331px;width:9px;height:1px;background:repeating-linear-gradient(90deg,#666 0,#666 1px,transparent 1px,transparent 2px)"></div>
<svg class="a" style="left:59px;top:322px" width="16" height="16" viewBox="0 0 16 16"><defs><linearGradient id="gf" x1="0" y1="0" x2="0" y2="1"><stop offset="0" stop-color="#fff4b8"/><stop offset="0.5" stop-color="#f6dc6a"/><stop offset="1" stop-color="#f0d050"/></linearGradient></defs><rect x="0.5" y="0.5" width="13" height="13" rx="2.5" fill="url(#gf)" stroke="#c8a020"/><path d="M9 3.6c-1.3-.6-2.3 0-2.6 1.4L5.4 10.4c-.3 1.3-1.2 1.7-2.1 1.3M4.6 6.4h3.6" stroke="#8a7020" stroke-width="1.2" fill="none"/><path d="M11.5 8.2l3.3 3.3-3.3 3.3-3.3-3.3z" fill="#f6dc6a" stroke="#a07810" stroke-width="1"/></svg>
<div class="t nv" style="left:81px;top:323px">Heiken Ashi</div>
<div class="a" style="left:48px;top:349px;width:9px;height:1px;background:repeating-linear-gradient(90deg,#666 0,#666 1px,transparent 1px,transparent 2px)"></div>
<svg class="a" style="left:59px;top:340px" width="16" height="16" viewBox="0 0 16 16"><defs><linearGradient id="gf" x1="0" y1="0" x2="0" y2="1"><stop offset="0" stop-color="#fff4b8"/><stop offset="0.5" stop-color="#f6dc6a"/><stop offset="1" stop-color="#f0d050"/></linearGradient></defs><rect x="0.5" y="0.5" width="13" height="13" rx="2.5" fill="url(#gf)" stroke="#c8a020"/><path d="M9 3.6c-1.3-.6-2.3 0-2.6 1.4L5.4 10.4c-.3 1.3-1.2 1.7-2.1 1.3M4.6 6.4h3.6" stroke="#8a7020" stroke-width="1.2" fill="none"/><path d="M11.5 8.2l3.3 3.3-3.3 3.3-3.3-3.3z" fill="#f6dc6a" stroke="#a07810" stroke-width="1"/></svg>
<div class="t nv" style="left:81px;top:341px">Ichimoku</div>
<div class="a" style="left:48px;top:367px;width:9px;height:1px;background:repeating-linear-gradient(90deg,#666 0,#666 1px,transparent 1px,transparent 2px)"></div>
<svg class="a" style="left:59px;top:358px" width="16" height="16" viewBox="0 0 16 16"><defs><linearGradient id="gf" x1="0" y1="0" x2="0" y2="1"><stop offset="0" stop-color="#fff4b8"/><stop offset="0.5" stop-color="#f6dc6a"/><stop offset="1" stop-color="#f0d050"/></linearGradient></defs><rect x="0.5" y="0.5" width="13" height="13" rx="2.5" fill="url(#gf)" stroke="#c8a020"/><path d="M9 3.6c-1.3-.6-2.3 0-2.6 1.4L5.4 10.4c-.3 1.3-1.2 1.7-2.1 1.3M4.6 6.4h3.6" stroke="#8a7020" stroke-width="1.2" fill="none"/><path d="M11.5 8.2l3.3 3.3-3.3 3.3-3.3-3.3z" fill="#f6dc6a" stroke="#a07810" stroke-width="1"/></svg>
<div class="t nv" style="left:81px;top:359px">iExposure</div>
<div class="a" style="left:48px;top:385px;width:9px;height:1px;background:repeating-linear-gradient(90deg,#666 0,#666 1px,transparent 1px,transparent 2px)"></div>
<svg class="a" style="left:59px;top:376px" width="16" height="16" viewBox="0 0 16 16"><defs><linearGradient id="gf" x1="0" y1="0" x2="0" y2="1"><stop offset="0" stop-color="#fff4b8"/><stop offset="0.5" stop-color="#f6dc6a"/><stop offset="1" stop-color="#f0d050"/></linearGradient></defs><rect x="0.5" y="0.5" width="13" height="13" rx="2.5" fill="url(#gf)" stroke="#c8a020"/><path d="M9 3.6c-1.3-.6-2.3 0-2.6 1.4L5.4 10.4c-.3 1.3-1.2 1.7-2.1 1.3M4.6 6.4h3.6" stroke="#8a7020" stroke-width="1.2" fill="none"/><path d="M11.5 8.2l3.3 3.3-3.3 3.3-3.3-3.3z" fill="#f6dc6a" stroke="#a07810" stroke-width="1"/></svg>
<div class="t nv" style="left:81px;top:377px">MACD</div>
<div class="a" style="left:48px;top:403px;width:9px;height:1px;background:repeating-linear-gradient(90deg,#666 0,#666 1px,transparent 1px,transparent 2px)"></div>
<svg class="a" style="left:59px;top:394px" width="16" height="16" viewBox="0 0 16 16"><defs><linearGradient id="gf" x1="0" y1="0" x2="0" y2="1"><stop offset="0" stop-color="#fff4b8"/><stop offset="0.5" stop-color="#f6dc6a"/><stop offset="1" stop-color="#f0d050"/></linearGradient></defs><rect x="0.5" y="0.5" width="13" height="13" rx="2.5" fill="url(#gf)" stroke="#c8a020"/><path d="M9 3.6c-1.3-.6-2.3 0-2.6 1.4L5.4 10.4c-.3 1.3-1.2 1.7-2.1 1.3M4.6 6.4h3.6" stroke="#8a7020" stroke-width="1.2" fill="none"/><path d="M11.5 8.2l3.3 3.3-3.3 3.3-3.3-3.3z" fill="#f6dc6a" stroke="#a07810" stroke-width="1"/></svg>
<div class="t nv" style="left:81px;top:395px">Momentum</div>
<div class="a" style="left:48px;top:421px;width:9px;height:1px;background:repeating-linear-gradient(90deg,#666 0,#666 1px,transparent 1px,transparent 2px)"></div>
<svg class="a" style="left:59px;top:412px" width="16" height="16" viewBox="0 0 16 16"><defs><linearGradient id="gf" x1="0" y1="0" x2="0" y2="1"><stop offset="0" stop-color="#fff4b8"/><stop offset="0.5" stop-color="#f6dc6a"/><stop offset="1" stop-color="#f0d050"/></linearGradient></defs><rect x="0.5" y="0.5" width="13" height="13" rx="2.5" fill="url(#gf)" stroke="#c8a020"/><path d="M9 3.6c-1.3-.6-2.3 0-2.6 1.4L5.4 10.4c-.3 1.3-1.2 1.7-2.1 1.3M4.6 6.4h3.6" stroke="#8a7020" stroke-width="1.2" fill="none"/><path d="M11.5 8.2l3.3 3.3-3.3 3.3-3.3-3.3z" fill="#f6dc6a" stroke="#a07810" stroke-width="1"/></svg>
<div class="t nv" style="left:81px;top:413px">OsMA</div>
<div class="a" style="left:48px;top:439px;width:9px;height:1px;background:repeating-linear-gradient(90deg,#666 0,#666 1px,transparent 1px,transparent 2px)"></div>
<svg class="a" style="left:59px;top:430px" width="16" height="16" viewBox="0 0 16 16"><defs><linearGradient id="gf" x1="0" y1="0" x2="0" y2="1"><stop offset="0" stop-color="#fff4b8"/><stop offset="0.5" stop-color="#f6dc6a"/><stop offset="1" stop-color="#f0d050"/></linearGradient></defs><rect x="0.5" y="0.5" width="13" height="13" rx="2.5" fill="url(#gf)" stroke="#c8a020"/><path d="M9 3.6c-1.3-.6-2.3 0-2.6 1.4L5.4 10.4c-.3 1.3-1.2 1.7-2.1 1.3M4.6 6.4h3.6" stroke="#8a7020" stroke-width="1.2" fill="none"/><path d="M11.5 8.2l3.3 3.3-3.3 3.3-3.3-3.3z" fill="#f6dc6a" stroke="#a07810" stroke-width="1"/></svg>
<div class="t nv" style="left:81px;top:431px">Parabolic</div>
<div class="a" style="left:48px;top:457px;width:9px;height:1px;background:repeating-linear-gradient(90deg,#666 0,#666 1px,transparent 1px,transparent 2px)"></div>
<svg class="a" style="left:59px;top:448px" width="16" height="16" viewBox="0 0 16 16"><defs><linearGradient id="gf" x1="0" y1="0" x2="0" y2="1"><stop offset="0" stop-color="#fff4b8"/><stop offset="0.5" stop-color="#f6dc6a"/><stop offset="1" stop-color="#f0d050"/></linearGradient></defs><rect x="0.5" y="0.5" width="13" height="13" rx="2.5" fill="url(#gf)" stroke="#c8a020"/><path d="M9 3.6c-1.3-.6-2.3 0-2.6 1.4L5.4 10.4c-.3 1.3-1.2 1.7-2.1 1.3M4.6 6.4h3.6" stroke="#8a7020" stroke-width="1.2" fill="none"/><path d="M11.5 8.2l3.3 3.3-3.3 3.3-3.3-3.3z" fill="#f6dc6a" stroke="#a07810" stroke-width="1"/></svg>
<div class="t nv" style="left:81px;top:449px">RSI</div>
<div class="a" style="left:48px;top:475px;width:9px;height:1px;background:repeating-linear-gradient(90deg,#666 0,#666 1px,transparent 1px,transparent 2px)"></div>
<svg class="a" style="left:59px;top:466px" width="16" height="16" viewBox="0 0 16 16"><defs><linearGradient id="gf" x1="0" y1="0" x2="0" y2="1"><stop offset="0" stop-color="#fff4b8"/><stop offset="0.5" stop-color="#f6dc6a"/><stop offset="1" stop-color="#f0d050"/></linearGradient></defs><rect x="0.5" y="0.5" width="13" height="13" rx="2.5" fill="url(#gf)" stroke="#c8a020"/><path d="M9 3.6c-1.3-.6-2.3 0-2.6 1.4L5.4 10.4c-.3 1.3-1.2 1.7-2.1 1.3M4.6 6.4h3.6" stroke="#8a7020" stroke-width="1.2" fill="none"/><path d="M11.5 8.2l3.3 3.3-3.3 3.3-3.3-3.3z" fill="#f6dc6a" stroke="#a07810" stroke-width="1"/></svg>
<div class="t nv" style="left:81px;top:467px">Stochastic</div>
<div class="a" style="left:11px;top:482px;width:230px;height:1px;background:#000"></div>
<div class="a" style="left:14px;top:482px;width:71px;height:20px;background:#fff;border:1px solid #000;border-top:none"></div>
<div class="t" style="left:24px;top:485px;font-size:12.5px">Common</div>
<div class="t" style="left:95px;top:485px;color:#6d6d6d;font-size:12.5px;letter-spacing:-0.5px">Favorites</div>
<div class="a" style="left:152px;top:486px;width:1px;height:13px;background:#555"></div>
<div class="a" style="left:8px;top:507px;width:237px;height:1px;background:#a0a0a0"></div>
<div class="a" style="left:244px;top:105px;width:1px;height:403px;background:#a0a0a0"></div>
<svg width="1120" height="380" style="position:absolute;left:246px;top:106px" shape-rendering="crispEdges">
<rect x="0" y="0" width="1120" height="380" fill="#000"/>
<path d="M4 26.5H1080 M4 59.5H1080 M4 92.5H1080 M4 125.5H1080 M4 158.5H1080 M4 191.5H1080 M4 224.5H1080 M4 257.5H1080 M4 290.5H1080 M4 323.5H1080 M4 356.5H1080" stroke="#7a8a9c" stroke-width="1" stroke-dasharray="3 3" fill="none"/>
<path d="M35.5 2V359 M67.5 2V359 M99.5 2V359 M131.5 2V359 M163.5 2V359 M195.5 2V359 M227.5 2V359 M259.5 2V359 M291.5 2V359 M323.5 2V359 M355.5 2V359 M387.5 2V359 M419.5 2V359 M451.5 2V359 M483.5 2V359 M515.5 2V359 M547.5 2V359 M579.5 2V359 M611.5 2V359 M643.5 2V359 M675.5 2V359 M707.5 2V359 M739.5 2V359 M771.5 2V359 M803.5 2V359 M835.5 2V359 M867.5 2V359 M899.5 2V359 M931.5 2V359 M963.5 2V359 M995.5 2V359 M1027.5 2V359 M1059.5 2V359" stroke="#7a8a9c" stroke-width="1" stroke-dasharray="3 3" fill="none"/>
<path d="M3 77.5H1080" stroke="#8b96a3" stroke-width="1"/>
<path d="M3.5 335V350 M4 345.5H6 M11.5 336V350 M9 346.5H11 M12 341.5H14 M19.5 334V344 M17 341.5H19 M20 334.5H22 M27.5 333V341 M25 334.5H27 M28 340.5H30 M35.5 334V344 M33 340.5H35 M36 337.5H38 M43.5 332V341 M41 337.5H43 M44 338.5H46 M51.5 319V344 M49 338.5H51 M52 320.5H54 M59.5 314V324 M57 320.5H59 M60 324.5H62 M67.5 321V339 M65 325.5H67 M68 322.5H70 M75.5 311V326 M73 322.5H75 M76 316.5H78 M83.5 263V320 M81 316.5H83 M84 275.5H86 M91.5 272V314 M89 275.5H91 M92 301.5H94 M99.5 297V306 M97 301.5H99 M100 305.5H102 M107.5 300V306 M105 306.5H107 M108 300.5H110 M115.5 290V300 M113 300.5H115 M116 290.5H118 M123.5 286V293 M121 290.5H123 M124 290.5H126 M131.5 256V291 M129 290.5H131 M132 257.5H134 M139.5 244V260 M137 257.5H139 M140 248.5H142 M147.5 239V259 M145 248.5H147 M148 242.5H150 M155.5 233V247 M153 242.5H155 M156 236.5H158 M163.5 234V252 M161 236.5H163 M164 251.5H166 M171.5 239V254 M169 250.5H171 M172 244.5H174 M179.5 216V246 M177 244.5H179 M180 229.5H182 M187.5 194V240 M185 229.5H187 M188 195.5H190 M195.5 190V221 M193 196.5H195 M196 208.5H198 M203.5 184V214 M201 208.5H203 M204 184.5H206 M211.5 182V197 M209 185.5H211 M212 187.5H214 M219.5 169V194 M217 187.5H219 M220 176.5H222 M227.5 164V202 M225 176.5H227 M228 189.5H230 M235.5 184V201 M233 189.5H235 M236 199.5H238 M243.5 180V215 M241 199.5H243 M244 209.5H246 M251.5 201V238 M249 209.5H251 M252 218.5H254 M259.5 195V221 M257 218.5H259 M260 203.5H262 M267.5 196V213 M265 203.5H267 M268 200.5H270 M275.5 196V213 M273 200.5H275 M276 202.5H278 M283.5 195V209 M281 202.5H283 M284 206.5H286 M291.5 202V215 M289 206.5H291 M292 206.5H294 M299.5 199V210 M297 205.5H299 M300 203.5H302 M307.5 200V206 M305 201.5H307 M308 204.5H310 M315.5 199V210 M313 203.5H315 M316 200.5H318 M323.5 194V204 M321 200.5H323 M324 200.5H326 M331.5 182V204 M329 200.5H331 M332 182.5H334 M339.5 178V195 M337 182.5H339 M340 195.5H342 M347.5 186V195 M345 195.5H347 M348 189.5H350 M355.5 186V203 M353 189.5H355 M356 200.5H358 M363.5 193V205 M361 200.5H363 M364 202.5H366 M371.5 203V219 M369 203.5H371 M372 212.5H374 M379.5 168V216 M377 212.5H379 M380 175.5H382 M387.5 174V192 M385 174.5H387 M388 187.5H390 M395.5 182V197 M393 187.5H395 M396 192.5H398 M403.5 165V197 M401 193.5H403 M404 180.5H406 M411.5 166V190 M409 179.5H411 M412 166.5H414 M419.5 151V171 M417 166.5H419 M420 154.5H422 M427.5 140V166 M425 155.5H427 M428 152.5H430 M435.5 145V179 M433 151.5H435 M436 160.5H438 M443.5 146V168 M441 160.5H443 M444 148.5H446 M451.5 125V166 M449 148.5H451 M452 129.5H454 M459.5 88V131 M457 129.5H459 M460 98.5H462 M467.5 84V107 M465 99.5H467 M468 87.5H470 M475.5 73V94 M473 87.5H475 M476 80.5H478 M483.5 80V90 M481 80.5H483 M484 86.5H486 M491.5 80V91 M489 86.5H491 M492 80.5H494 M499.5 73V84 M497 80.5H499 M500 78.5H502 M507.5 62V84 M505 78.5H507 M508 62.5H510 M515.5 60V71 M513 62.5H515 M516 67.5H518 M523.5 64V75 M521 67.5H523 M524 74.5H526 M531.5 61V77 M529 73.5H531 M532 61.5H534 M539.5 61V70 M537 62.5H539 M540 68.5H542 M547.5 68V78 M545 68.5H547 M548 77.5H550 M555.5 67V77 M553 77.5H555 M556 74.5H558 M563.5 55V76 M561 73.5H563 M564 73.5H566 M571.5 62V82 M569 73.5H571 M572 75.5H574 M579.5 47V81 M577 75.5H579 M580 60.5H582 M587.5 46V64 M585 61.5H587 M588 48.5H590 M595.5 47V58 M593 49.5H595 M596 52.5H598 M603.5 41V52 M601 52.5H603 M604 48.5H606 M611.5 43V62 M609 48.5H611 M612 58.5H614 M619.5 51V70 M617 58.5H619 M620 62.5H622 M627.5 45V72 M625 62.5H627 M628 55.5H630 M635.5 38V62 M633 55.5H635 M636 51.5H638 M643.5 50V62 M641 50.5H643 M644 55.5H646 M651.5 52V64 M649 55.5H651 M652 52.5H654 M659.5 33V54 M657 52.5H659 M660 37.5H662 M667.5 37V49 M665 37.5H667 M668 46.5H670 M675.5 40V47 M673 46.5H675 M676 43.5H678 M683.5 39V47 M681 44.5H683 M684 44.5H686 M691.5 41V47 M689 43.5H691 M692 43.5H694 M699.5 38V45 M697 42.5H699 M700 40.5H702 M707.5 28V45 M705 40.5H707 M708 36.5H710 M715.5 23V38 M713 36.5H715 M716 28.5H718 M723.5 28V36 M721 30.5H723 M724 35.5H726 M731.5 24V38 M729 35.5H731 M732 29.5H734 M739.5 21V30 M737 29.5H739 M740 23.5H742 M747.5 23V50 M745 24.5H747 M748 48.5H750 M755.5 32V50 M753 48.5H755 M756 36.5H758 M763.5 34V62 M761 37.5H763 M764 57.5H766 M771.5 55V69 M769 56.5H771 M772 61.5H774 M779.5 59V74 M777 61.5H779 M780 72.5H782 M787.5 59V72 M785 72.5H787 M788 62.5H790 M795.5 62V76 M793 62.5H795 M796 66.5H798 M803.5 48V67 M801 66.5H803 M804 48.5H806 M811.5 41V59 M809 48.5H811 M812 52.5H814 M819.5 41V72 M817 53.5H819 M820 66.5H822 M827.5 57V70 M825 64.5H827 M828 62.5H830 M835.5 56V100 M833 61.5H835 M836 95.5H838 M843.5 55V125 M841 95.5H843 M844 84.5H846 M851.5 73V95 M849 84.5H851 M852 80.5H854 M859.5 76V82 M857 80.5H859 M860 77.5H862" stroke="#00ff00" stroke-width="1" fill="none"/>
<rect x="2.5" y="2.5" width="1078" height="357" stroke="#fff" fill="none"/>
<path d="M859 3L868 3L863.5 8Z" fill="#8292a3" shape-rendering="auto"/>
<path d="M33 359L42 359L37.5 354Z" fill="#8292a3" shape-rendering="auto"/>
<path d="M1081 26.5H1084 M1081 59.5H1084 M1081 92.5H1084 M1081 125.5H1084 M1081 158.5H1084 M1081 191.5H1084 M1081 224.5H1084 M1081 257.5H1084 M1081 290.5H1084 M1081 323.5H1084 M1081 356.5H1084 M3.5 360V363 M67.5 360V363 M131.5 360V363 M195.5 360V363 M259.5 360V363 M323.5 360V363 M387.5 360V363 M451.5 360V363 M515.5 360V363 M579.5 360V363 M643.5 360V363 M707.5 360V363 M771.5 360V363 M835.5 360V363" stroke="#fff" stroke-width="1"/>
</svg>
<div class="ct" style="left:1332px;top:127px;letter-spacing:-0.4px">1.14080</div>
<div class="ct" style="left:1332px;top:160px;letter-spacing:-0.4px">1.13865</div>
<div class="ct" style="left:1332px;top:193px;letter-spacing:-0.4px">1.13650</div>
<div class="ct" style="left:1332px;top:226px;letter-spacing:-0.4px">1.13435</div>
<div class="ct" style="left:1332px;top:259px;letter-spacing:-0.4px">1.13220</div>
<div class="ct" style="left:1332px;top:292px;letter-spacing:-0.4px">1.13005</div>
<div class="ct" style="left:1332px;top:325px;letter-spacing:-0.4px">1.12790</div>
<div class="ct" style="left:1332px;top:358px;letter-spacing:-0.4px">1.12575</div>
<div class="ct" style="left:1332px;top:391px;letter-spacing:-0.4px">1.12355</div>
<div class="ct" style="left:1332px;top:424px;letter-spacing:-0.4px">1.12140</div>
<div class="ct" style="left:1332px;top:457px;letter-spacing:-0.4px">1.11925</div>
<div class="a" style="left:1328px;top:178px;width:38px;height:11px;background:#fff"></div>
<div class="ct" style="left:1332px;top:178px;color:#000;letter-spacing:-0.4px">1.13751</div>
<div class="ct cd" style="left:249px;top:469px">19 Jun 2019</div>
<div class="ct cd" style="left:313px;top:469px">19 Jun 19:00</div>
<div class="ct cd" style="left:377px;top:469px">20 Jun 03:00</div>
<div class="ct cd" style="left:441px;top:469px">20 Jun 11:00</div>
<div class="ct cd" style="left:505px;top:469px">20 Jun 19:00</div>
<div class="ct cd" style="left:569px;top:469px">21 Jun 03:00</div>
<div class="ct cd" style="left:633px;top:469px">21 Jun 11:00</div>
<div class="ct cd" style="left:697px;top:469px">21 Jun 19:00</div>
<div class="ct cd" style="left:761px;top:469px">24 Jun 03:00</div>
<div class="ct cd" style="left:825px;top:469px">24 Jun 11:00</div>
<div class="ct cd" style="left:889px;top:469px">24 Jun 19:00</div>
<div class="ct cd" style="left:953px;top:469px">25 Jun 03:00</div>
<div class="ct cd" style="left:1017px;top:469px">25 Jun 11:00</div>
<div class="ct cd" style="left:1081px;top:469px">25 Jun 19:00</div>
<div class="ct" style="left:253px;top:112px">EURUSD,H1&nbsp; 1.13728 1.13759 1.13722 1.13751</div>
<div class="ct" style="left:253px;top:125px;letter-spacing:-0.25px">Saddam_indicator02-EA testing with OpenBuy=1; MagicNo=2019; MaxTrades=50; Lots=0.2; Decrease=2; Takeprofit=0; Stoploss=0; USD_Profit=0; USD_Loss=0; SignalPeriod=50; ArrowPeriod=2; SL_pips=100;</div>
<div class="a" style="left:245px;top:486px;width:1121px;height:2px;background:#fff"></div>
<div class="a" style="left:245px;top:488px;width:1121px;height:1px;background:#000"></div>
<div class="a" style="left:245px;top:489px;width:1121px;height:19px;background:#f0f0f0"></div>
<div class="a" style="left:245px;top:489px;width:1121px;height:1px;background:#fff"></div>
<div class="a" style="left:245px;top:508px;width:1121px;height:1px;background:#f8f8f8"></div>
<div class="t" style="left:260px;top:491px;color:#6d6d6d;letter-spacing:-0.6px">USDCHF,H4</div>
<div class="a" style="left:334px;top:492px;width:1px;height:13px;background:#555"></div>
<div class="t" style="left:345px;top:491px;color:#6d6d6d;letter-spacing:-0.6px">GBPUSD,H4</div>
<div class="a" style="left:418px;top:492px;width:1px;height:13px;background:#555"></div>
<div class="t" style="left:429px;top:491px;color:#6d6d6d;letter-spacing:-0.6px">USDJPY,H4</div>
<div class="a" style="left:498px;top:492px;width:1px;height:13px;background:#555"></div>
<div class="t" style="left:509px;top:491px;color:#6d6d6d;letter-spacing:-0.6px">EURUSD,H1</div>
<div class="a" style="left:582px;top:492px;width:1px;height:13px;background:#555"></div>
<div class="t" style="left:592px;top:491px;color:#6d6d6d;letter-spacing:-0.6px">EURUSD,M5</div>
<div class="a" style="left:666px;top:492px;width:1px;height:13px;background:#555"></div>
<div class="t" style="left:677px;top:491px;color:#6d6d6d;letter-spacing:-0.6px">EURUSD,H1</div>
<div class="a" style="left:750px;top:492px;width:1px;height:13px;background:#555"></div>
<div class="t" style="left:762px;top:491px;color:#6d6d6d;letter-spacing:-0.6px">USDJPY,M1</div>
<div class="a" style="left:834px;top:488px;width:84px;height:19px;background:#fff;border:1px solid #000;border-top:none"></div>
<div class="t" style="left:845px;top:491px;letter-spacing:-0.6px">EURUSD,H1</div>
<svg class="a" style="left:1340px;top:493px" width="5" height="8" viewBox="0 0 5 8"><path d="M4.5 0L0.5 4 4.5 8Z" fill="#999"/></svg>
<svg class="a" style="left:1359px;top:493px" width="5" height="8" viewBox="0 0 5 8"><path d="M0.5 0L4.5 4 0.5 8Z" fill="#999"/></svg>
<div class="a" style="left:8px;top:509px;width:1358px;height:203px;background:#f0f0f0"></div>
<svg class="a" style="left:12px;top:515px" width="7" height="6" viewBox="0 0 7 6"><path d="M0.5 0.5L6.5 5.5M6.5 0.5L0.5 5.5" stroke="#000" stroke-width="1.8"/></svg>
<div class="a" style="left:9px;top:527px;width:13px;height:182px;background:linear-gradient(90deg,#a8bcd4,#b4c6dc)"></div>
<div class="t" style="left:-2px;top:685px;width:36px;transform:rotate(-90deg);font-size:12.5px;color:#141a36;text-align:center">Tester</div>
<div class="a" style="left:23px;top:512px;width:1343px;height:176px;background:#fff;border-top:1px solid #a0a0a0;border-left:1px solid #a0a0a0"></div>
<div class="a" style="left:24px;top:513px;width:1329px;height:23px;background:linear-gradient(180deg,#fff 0,#fff 40%,#f2f3f5 45%,#f2f3f5 100%);border-bottom:1px solid #d5d5d5"></div>
<div class="a" style="left:183px;top:514px;width:1px;height:21px;background:#e2e4e8"></div>
<div class="t" style="left:30px;top:518px">Time</div>
<div class="t" style="left:190px;top:518px">Message</div>
<div class="a" style="left:24px;top:537px;width:1329px;height:20px;background:#fff;border-bottom:1px solid #dcdcdc;overflow:hidden"></div>
<div class="a" style="left:182px;top:536px;width:1px;height:21px;background:#d0d0d0"></div>
<div class="a" style="left:24px;top:557px;width:1329px;height:20px;background:#ebebeb;border-bottom:1px solid #dcdcdc;overflow:hidden"></div>
<div class="a" style="left:182px;top:556px;width:1px;height:21px;background:#d0d0d0"></div>
<div class="a" style="left:24px;top:577px;width:1329px;height:20px;background:#fff;border-bottom:1px solid #dcdcdc;overflow:hidden"></div>
<div class="a" style="left:182px;top:576px;width:1px;height:21px;background:#d0d0d0"></div>
<div class="a" style="left:24px;top:597px;width:1329px;height:20px;background:#ebebeb;border-bottom:1px solid #dcdcdc;overflow:hidden"></div>
<div class="a" style="left:182px;top:596px;width:1px;height:21px;background:#d0d0d0"></div>
<div class="a" style="left:24px;top:617px;width:1329px;height:20px;background:#fff;border-bottom:1px solid #dcdcdc;overflow:hidden"></div>
<div class="a" style="left:182px;top:616px;width:1px;height:21px;background:#d0d0d0"></div>
<div class="a" style="left:24px;top:637px;width:1329px;height:20px;background:#ebebeb;border-bottom:1px solid #dcdcdc;overflow:hidden"></div>
<div class="a" style="left:182px;top:636px;width:1px;height:21px;background:#d0d0d0"></div>
<div class="a" style="left:24px;top:657px;width:1329px;height:20px;background:#fff;border-bottom:1px solid #dcdcdc;overflow:hidden"></div>
<div class="a" style="left:182px;top:656px;width:1px;height:21px;background:#d0d0d0"></div>
<div class="a" style="left:24px;top:677px;width:1329px;height:10px;background:#ebebeb;border-bottom:1px solid #dcdcdc;overflow:hidden"></div>
<div class="a" style="left:182px;top:676px;width:1px;height:11px;background:#d0d0d0"></div>
<svg class="a" style="left:29px;top:542px" width="8" height="8" viewBox="0 0 8 8"><circle cx="4" cy="4" r="3.4" fill="#bbb" stroke="#777" stroke-width="0.8"/></svg>
<div class="t" style="left:45px;top:540px;letter-spacing:-0.55px">2019.06.25 22:09:30.693</div>
<div class="t" style="left:188px;top:540px;letter-spacing:-0.1px">TestGenerator: current spread 18 used</div>
<svg class="a" style="left:28px;top:560px" width="12" height="11" viewBox="0 0 12 11"><path d="M6 0.5L11.5 10.5H0.5Z" fill="#e8541a" stroke="#b83a10" stroke-width="0.8"/><path d="M6 3.5V7M6 8v1.5" stroke="#fff" stroke-width="1"/></svg>
<div class="t" style="left:45px;top:560px;letter-spacing:-0.55px">2019.06.25 22:09:30.678</div>
<div class="t" style="left:188px;top:560px;letter-spacing:-0.1px">Tester: Check start, test and stop of optimized parameter 'SL_pips'</div>
<svg class="a" style="left:28px;top:580px" width="12" height="11" viewBox="0 0 12 11"><path d="M6 0.5L11.5 10.5H0.5Z" fill="#e8541a" stroke="#b83a10" stroke-width="0.8"/><path d="M6 3.5V7M6 8v1.5" stroke="#fff" stroke-width="1"/></svg>
<div class="t" style="left:45px;top:580px;letter-spacing:-0.55px">2019.06.25 22:09:30.678</div>
<div class="t" style="left:188px;top:580px;letter-spacing:-0.1px">Tester: Check start, test and stop of optimized parameter 'ArrowPeriod'</div>
<svg class="a" style="left:28px;top:600px" width="12" height="11" viewBox="0 0 12 11"><path d="M6 0.5L11.5 10.5H0.5Z" fill="#e8541a" stroke="#b83a10" stroke-width="0.8"/><path d="M6 3.5V7M6 8v1.5" stroke="#fff" stroke-width="1"/></svg>
<div class="t" style="left:45px;top:600px;letter-spacing:-0.55px">2019.06.25 22:09:30.678</div>
<div class="t" style="left:188px;top:600px;letter-spacing:-0.1px">Tester: Check start, test and stop of optimized parameter 'SignalPeriod'</div>
<svg class="a" style="left:28px;top:620px" width="12" height="11" viewBox="0 0 12 11"><path d="M6 0.5L11.5 10.5H0.5Z" fill="#e8541a" stroke="#b83a10" stroke-width="0.8"/><path d="M6 3.5V7M6 8v1.5" stroke="#fff" stroke-width="1"/></svg>
<div class="t" style="left:45px;top:620px;letter-spacing:-0.55px">2019.06.25 22:09:30.678</div>
<div class="t" style="left:188px;top:620px;letter-spacing:-0.1px">Tester: Check start, test and stop of optimized parameter 'USD_Loss'</div>
<svg class="a" style="left:28px;top:640px" width="12" height="11" viewBox="0 0 12 11"><path d="M6 0.5L11.5 10.5H0.5Z" fill="#e8541a" stroke="#b83a10" stroke-width="0.8"/><path d="M6 3.5V7M6 8v1.5" stroke="#fff" stroke-width="1"/></svg>
<div class="t" style="left:45px;top:640px;letter-spacing:-0.55px">2019.06.25 22:09:30.678</div>
<div class="t" style="left:188px;top:640px;letter-spacing:-0.1px">Tester: Check start, test and stop of optimized parameter 'USD_Profit'</div>
<svg class="a" style="left:28px;top:660px" width="12" height="11" viewBox="0 0 12 11"><path d="M6 0.5L11.5 10.5H0.5Z" fill="#e8541a" stroke="#b83a10" stroke-width="0.8"/><path d="M6 3.5V7M6 8v1.5" stroke="#fff" stroke-width="1"/></svg>
<div class="t" style="left:45px;top:660px;letter-spacing:-0.55px">2019.06.25 22:09:30.678</div>
<div class="t" style="left:188px;top:660px;letter-spacing:-0.1px">Tester: Check start, test and stop of optimized parameter 'Stoploss'</div>
<svg class="a" style="left:28px;top:680px" width="12" height="11" viewBox="0 0 12 11"><path d="M6 0.5L11.5 10.5H0.5Z" fill="#e8541a" stroke="#b83a10" stroke-width="0.8"/><path d="M6 3.5V7M6 8v1.5" stroke="#fff" stroke-width="1"/></svg>
<div class="t" style="left:45px;top:680px;letter-spacing:-0.55px">2019.06.25 22:09:30.678</div>
<div class="t" style="left:188px;top:680px;letter-spacing:-0.1px">Tester: Check start, test and stop of optimized parameter 'Takeprofit'</div>
<div class="a" style="left:23px;top:687px;width:1343px;height:1px;background:#000"></div>
<div class="a" style="left:23px;top:688px;width:1343px;height:24px;background:#f0f0f0"></div>
<div class="a" style="left:1353px;top:513px;width:13px;height:174px;background:#f0f0f0"></div>
<svg class="a" style="left:1359px;top:519px" width="8" height="5" viewBox="0 0 8 5"><path d="M0 4.5L4 0.5 8 4.5Z" fill="#555"/></svg>
<svg class="a" style="left:1359px;top:679px" width="8" height="5" viewBox="0 0 8 5"><path d="M0 0.5L4 4.5 8 0.5Z" fill="#555"/></svg>
<div class="a" style="left:1354px;top:536px;width:15px;height:15px;background:linear-gradient(90deg,#f4f4f4 0,#ececec 45%,#d8d8d8 55%,#d0d0d0);border:1px solid #9a9a9a;border-radius:2px"></div>
<div class="t" style="left:36px;top:690px;color:#6d6d6d">Settings</div>
<div class="a" style="left:88px;top:691px;width:1px;height:13px;background:#555"></div>
<div class="t" style="left:98px;top:690px;color:#6d6d6d">Optimization Results</div>
<div class="a" style="left:217px;top:691px;width:1px;height:13px;background:#555"></div>
<div class="t" style="left:227px;top:690px;color:#6d6d6d">Optimization Graph</div>
<div class="a" style="left:341px;top:687px;width:58px;height:20px;background:#fff;border:1px solid #000;border-top:none"></div>
<div class="t" style="left:350px;top:690px">Journal</div>
<div class="a" style="left:8px;top:710px;width:1358px;height:2px;background:#f8f8f8"></div><div class="a" style="left:8px;top:712px;width:1358px;height:1px;background:#a0a0a0"></div>
<div class="a" style="left:8px;top:713px;width:1358px;height:15px;background:#f0f0f0"></div>
<div class="t" style="left:10px;top:718px;letter-spacing:-0.4px">For Help, press F1</div>
<div class="a" style="left:661px;top:716px;width:1px;height:12px;background:#a0a0a0"></div>
<div class="a" style="left:778px;top:716px;width:1px;height:12px;background:#a0a0a0"></div>
<div class="a" style="left:879px;top:716px;width:1px;height:12px;background:#a0a0a0"></div>
<div class="a" style="left:950px;top:716px;width:1px;height:12px;background:#a0a0a0"></div>
<div class="a" style="left:1021px;top:716px;width:1px;height:12px;background:#a0a0a0"></div>
<div class="a" style="left:1089px;top:716px;width:1px;height:12px;background:#a0a0a0"></div>
<div class="a" style="left:1159px;top:716px;width:1px;height:12px;background:#a0a0a0"></div>
<div class="a" style="left:1225px;top:716px;width:1px;height:12px;background:#a0a0a0"></div>
<div class="t" style="left:667px;top:718px">Default</div>
<div class="a" style="left:1231px;top:719px;width:22px;height:9px;background:repeating-linear-gradient(90deg,#5a7a10 0,#5a7a10 1px,transparent 1px,transparent 3px)"></div>
<div class="t" style="left:1258px;top:718px">221/3 kb</div>
<div class="a" style="left:0;top:728px;width:1366px;height:16px;background:linear-gradient(90deg,#1e3a5a 0,#3a6290 80px,#5a84b0 300px,#6a94bc 600px,#5a82ac 900px,#2c4c72 1100px,#223e60 1300px)"></div>
<div class="a" style="left:0;top:728px;width:1366px;height:16px;background:linear-gradient(180deg,rgba(255,255,255,0.6) 0,rgba(255,255,255,0.4) 3px,rgba(255,255,255,0.1) 9px,rgba(0,0,0,0.08) 16px)"></div>
<div class="a" style="left:0;top:728px;width:1366px;height:1px;background:#1a2a3a"></div>
<div class="a" style="left:10px;top:730px;width:36px;height:36px;border-radius:50%;background:radial-gradient(circle at 50% 30%,#dce8f4 0,#8aa8c8 40%,#3a5a80 75%);border:1px solid #203850"></div>
<div class="a" style="left:17px;top:738px;width:11px;height:8px;background:linear-gradient(135deg,#f8a040,#e04818);border-radius:40% 10% 0 0;transform:skewY(-8deg)"></div><div class="a" style="left:29px;top:737px;width:11px;height:8px;background:linear-gradient(135deg,#b0e050,#5aa828);border-radius:10% 40% 0 0;transform:skewY(-8deg)"></div>
<div class="a" style="left:80px;top:734px;width:20px;height:20px;border-radius:50%;border:5px solid #2a8ee8"></div><div class="a" style="left:76px;top:731px;width:30px;height:16px;border-radius:50%;border:2.5px solid transparent;border-top-color:#f4c430;border-right-color:#f4c430;transform:rotate(-20deg)"></div>
<div class="a" style="left:136px;top:734px;width:30px;height:10px;background:#f2e2a8;border:1px solid #c0a050"></div>
<div class="a" style="left:140px;top:731px;width:3px;height:3px;background:#2a2"></div><div class="a" style="left:148px;top:732px;width:3px;height:3px;background:#d22"></div><div class="a" style="left:155px;top:733px;width:3px;height:3px;background:#29d"></div>
<div class="a" style="left:198px;top:737px;width:24px;height:7px;background:#7aaae0;border:1px solid #c8dcf0"></div>
<div class="a" style="left:202px;top:739px;width:12px;height:10px;border-radius:50%;background:#f0802a"></div>
<div class="a" style="left:246px;top:729px;width:58px;height:15px;border:1px solid #4a6a8a;border-bottom:none;border-radius:3px 3px 0 0;background:linear-gradient(180deg,rgba(255,255,255,0.55),rgba(255,255,255,0.25))"></div>
<div class="a" style="left:432px;top:729px;width:58px;height:15px;border:1px solid #4a6a8a;border-bottom:none;border-radius:3px 3px 0 0;background:linear-gradient(180deg,rgba(255,255,255,0.55),rgba(255,255,255,0.25))"></div>
<div class="a" style="left:493px;top:729px;width:59px;height:15px;border:1px solid #4a6a8a;border-bottom:none;border-radius:3px 3px 0 0;background:linear-gradient(180deg,rgba(255,255,255,0.55),rgba(255,255,255,0.25))"></div>
<div class="a" style="left:556px;top:729px;width:58px;height:15px;border:1px solid #4a6a8a;border-bottom:none;border-radius:3px 3px 0 0;background:linear-gradient(180deg,rgba(255,255,255,0.55),rgba(255,255,255,0.25))"></div>
<div class="a" style="left:303px;top:729px;width:1px;height:15px;background:#3a5a7a"></div><div class="a" style="left:430px;top:729px;width:1px;height:15px;background:#3a5a7a"></div>
<div class="a" style="left:261px;top:732px;width:28px;height:28px;border-radius:50%;background:conic-gradient(from -60deg,#db4437 0 33%,#f4c20d 0 66%,#0f9d58 0)"></div>
<div class="a" style="left:269px;top:740px;width:12px;height:12px;border-radius:50%;background:#4285f4;border:2px solid #fff"></div>
<div class="a" style="left:333px;top:733px;width:5px;height:11px;background:#cfd6de"></div><div class="a" style="left:328px;top:740px;width:6px;height:4px;background:#222"></div>
<div class="a" style="left:386px;top:733px;width:28px;height:28px;border-radius:50%;background:#f4b400"></div>
<div class="a" style="left:450px;top:734px;width:22px;height:10px;background:#7ab0e8;border:1px solid #e8f2fc"></div>
<div class="a" style="left:507px;top:732px;width:31px;height:12px;border-radius:4px 4px 0 0;background:#1a1a1a"></div>
<div class="a" style="left:570px;top:731px;width:30px;height:13px;background:#c80a14"></div>
<div class="a" style="left:579px;top:734px;width:12px;height:10px;background:#fff;clip-path:polygon(50% 0,100% 40%,100% 100%,0 100%,0 40%)"></div>
<div class="t" style="left:1100px;top:736px;font-size:11px;color:#fff">EN</div>
<div class="a" style="left:1158px;top:740px;width:7px;height:4px;background:#2ad02a"></div>
<div class="a" style="left:1176px;top:741px;width:6px;height:3px;background:#ddd"></div><div class="a" style="left:1204px;top:741px;width:7px;height:3px;background:#ddd;border-radius:3px 3px 0 0"></div>
<div class="t" style="left:1293px;top:731px;font-size:12px;color:#fff">10:11</div>
<div class="a" style="left:1324px;top:739px;width:4px;height:5px;background:#fff"></div>
<div class="a" style="left:1351px;top:729px;width:15px;height:15px;border-left:1px solid #8aa8c8;border-top:1px solid #8aa8c8;background:linear-gradient(180deg,#5a7a9e,#3a5a80)"></div>
</body></html>
